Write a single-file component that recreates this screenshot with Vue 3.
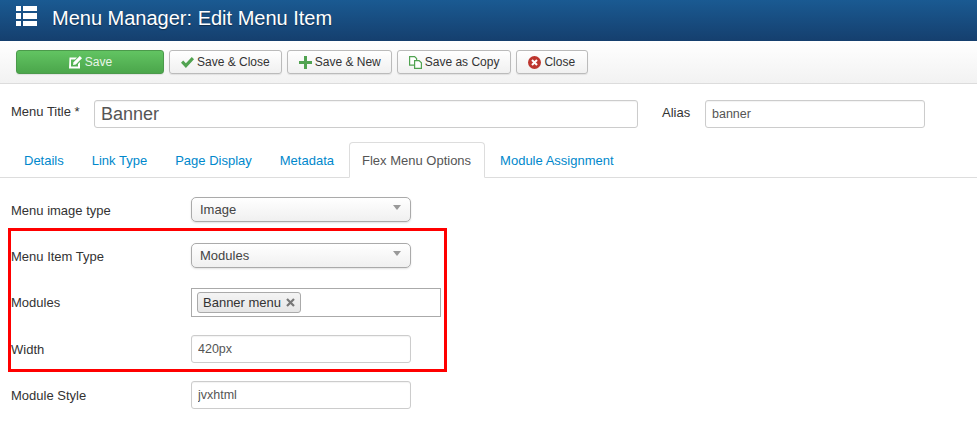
<template>
  <div class="page">
    <header class="title-bar">
      <svg class="title-icon" width="21" height="20" viewBox="0 0 21 20">
        <path fill="#fff" d="M0 0h5v5H0zM7 0h14v5H7zM0 7h5v6H0zM7 7h14v6H7zM0 15h5v5H0zM7 15h14v5H7z" />
      </svg>
      <h1>Menu Manager: Edit Menu Item</h1>
    </header>

    <div class="toolbar">
      <button class="btn btn-save">
        <svg width="14" height="13" viewBox="0 0 14 13">
          <path fill="#fff" d="M1.5 1.5h7.5L7 3.5H3v7h7V8l2-2v6.500H1z" />
          <path fill="#fff" d="M11.800 0 14 2.200 7.800 8.500 5 9l.5-2.800z" />
        </svg>
        Save
      </button>
      <button class="btn">
        <svg width="13" height="11" viewBox="0 0 13 11">
          <path fill="#51a351" d="M0 5.800 2.200 3.600 4.900 6.300 10.800 0 13 2.200 4.900 11z" />
        </svg>
        Save &amp; Close
      </button>
      <button class="btn btn-new">
        <svg width="13" height="13" viewBox="0 0 13 13">
          <path fill="#51a351" d="M5 0h3v5h5v3H8v5H5V8H0V5h5z" />
        </svg>
        Save &amp; New
      </button>
      <button class="btn">
        <svg width="13" height="13" viewBox="0 0 13 13">
          <path fill="#fff" stroke="#51a351" stroke-width="1.200" d="M.6.6h5l2 2v6.500H.6z" />
          <path fill="#fff" stroke="#51a351" stroke-width="1.200" d="M5.600 4.600h4.500l2.300 2.200v5.600H5.600z" />
        </svg>
        Save as Copy
      </button>
      <button class="btn btn-close">
        <svg width="13" height="13" viewBox="0 0 13 13">
          <circle cx="6.500" cy="6.500" r="6.500" fill="#bd362f" />
          <path stroke="#fff" stroke-width="2" d="M4 4l5 5M9 4l-5 5" />
        </svg>
        Close
      </button>
    </div>

    <div class="title-row">
      <label class="title-label">Menu Title <span>*</span></label>
      <input class="field title-input" value="Banner" />
      <label class="alias-label">Alias</label>
      <input class="field alias-input" value="banner" />
    </div>

    <ul class="tabs">
      <li v-for="tab in tabs" :key="tab" :class="{ active: tab === 'Flex Menu Options' }">{{ tab }}</li>
    </ul>

    <div class="form">
      <div class="row row-up">
        <label>Menu image type</label>
        <div class="select">Image<i></i></div>
      </div>
      <div class="row row-up">
        <label>Menu Item Type</label>
        <div class="select">Modules<i></i></div>
      </div>
      <div class="row row-up">
        <label>Modules</label>
        <div class="multi">
          <span class="chip">Banner menu
            <svg width="9" height="9" viewBox="0 0 9 9">
              <path stroke="#777" stroke-width="2.200" d="M1 1l7 7M8 1L1 8" />
            </svg>
          </span>
        </div>
      </div>
      <div class="row">
        <label>Width</label>
        <input class="field side-input" value="420px" />
      </div>
      <div class="row">
        <label>Module Style</label>
        <input class="field side-input" value="jvxhtml" />
      </div>
      <div class="highlight"></div>
    </div>
  </div>
</template>

<script setup>
const tabs = ['Details', 'Link Type', 'Page Display', 'Metadata', 'Flex Menu Options', 'Module Assignment']
</script>

<style>
html, body {
  margin: 0;
  background: #fff;
}
</style>

<style scoped>
.page {
  width: 977px;
  height: 441px;
  overflow: hidden;
  font-family: "Liberation Sans", Arial, sans-serif;
  font-size: 13px;
  color: #333;
}

.title-bar {
  height: 41px;
  box-sizing: border-box;
  padding: 6px 0 0 16px;
  display: flex;
  align-items: flex-start;
  background: linear-gradient(to bottom, #1a5a92, #153f6e);
}

.title-icon {
  flex: none;
}

h1 {
  margin: 0 0 0 15px;
  font-size: 20px;
  line-height: 24px;
  font-weight: 400;
  color: #fff;
  text-shadow: 0 1px 1px rgba(0, 0, 0, 0.4);
}

.toolbar {
  height: 43px;
  box-sizing: border-box;
  padding: 9px 16px 0;
  display: flex;
  gap: 5px;
  background: linear-gradient(to bottom, #fff, #f2f2f2);
  border-bottom: 1px solid #dcdcdc;
}

.btn {
  height: 24px;
  box-sizing: border-box;
  padding: 0 11px;
  display: flex;
  align-items: center;
  gap: 3px;
  font: 12px "Liberation Sans", Arial, sans-serif;
  color: #333;
  background: linear-gradient(to bottom, #fff, #f0f0f0);
  border: 1px solid #bbb;
  border-radius: 3px;
  box-shadow: 0 1px 1px rgba(0, 0, 0, 0.08);
}

.btn-new {
  padding-right: 10px;
}

.btn-close {
  padding-right: 12px;
}

.btn-save {
  width: 148px;
  justify-content: center;
  color: #e8f5e8;
  background: linear-gradient(to bottom, #62c462, #4ba64b);
  border-color: #4b9a4b;
}

.title-row {
  display: flex;
  align-items: flex-start;
  padding: 16px 0 0 11px;
}

.title-label {
  width: 83px;
  line-height: 24px;
}

.field {
  box-sizing: border-box;
  height: 28px;
  padding: 0 6px;
  font-family: "Liberation Sans", Arial, sans-serif;
  font-size: 12.500px;
  color: #555;
  background: #fff;
  border: 1px solid #ccc;
  border-radius: 3px;
  outline: none;
  box-shadow: inset 0 1px 1px rgba(0, 0, 0, 0.05);
}

.title-input {
  width: 544px;
  font-size: 18px;
}

.alias-label {
  margin-left: 24px;
  width: 43px;
  line-height: 26px;
}

.alias-input {
  width: 220px;
}

.tabs {
  list-style: none;
  margin: 14px 0 0;
  padding: 0 0 0 11px;
  height: 35px;
  display: flex;
  gap: 2px;
  border-bottom: 1px solid #ddd;
}

.tabs li {
  height: 35px;
  box-sizing: border-box;
  padding: 0 12px;
  line-height: 35px;
  color: #08c;
  border: 1px solid transparent;
  border-radius: 4px 4px 0 0;
}

.tabs li.active {
  height: 36px;
  padding-right: 13px;
  color: #555;
  background: #fff;
  border-color: #ddd #ddd #fff;
}

.form {
  position: relative;
  padding: 19px 0 0 11px;
}

.row {
  display: flex;
  align-items: center;
  height: 28px;
  margin-bottom: 18px;
}

.row label {
  width: 180px;
  flex: none;
}

.row-up label {
  margin-top: -2px;
}

.select {
  position: relative;
  width: 220px;
  height: 25px;
  margin-top: -3px;
  box-sizing: border-box;
  padding-left: 8px;
  line-height: 23px;
  color: #444;
  background: linear-gradient(to bottom, #fff, #f0f0f0);
  border: 1px solid #aaa;
  border-radius: 5px;
  box-shadow: 0 1px 2px rgba(0, 0, 0, 0.12);
}

.select i {
  position: absolute;
  right: 9px;
  top: 7px;
  border: 4px solid transparent;
  border-top: 5px solid #999;
  border-bottom: 0;
}

.multi {
  width: 250px;
  height: 29px;
  margin-top: -1px;
  box-sizing: border-box;
  padding: 3px 5px;
  background: #fff;
  border: 1px solid #aaa;
}

.chip {
  display: inline-flex;
  align-items: center;
  gap: 5px;
  height: 21px;
  box-sizing: border-box;
  padding: 0 5px;
  background: linear-gradient(to bottom, #f4f4f4, #e6e6e6);
  border: 1px solid #aaa;
  border-radius: 3px;
}

.side-input {
  width: 220px;
}

.highlight {
  position: absolute;
  left: 8px;
  top: 50px;
  width: 439px;
  height: 144px;
  box-sizing: border-box;
  border: 3px solid #f00;
  pointer-events: none;
}
</style>
